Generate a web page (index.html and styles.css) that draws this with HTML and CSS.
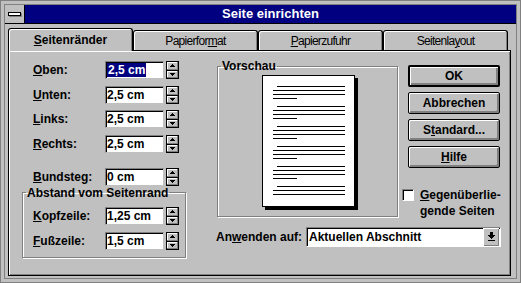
FILE: index.html
```html
<!DOCTYPE html>
<html lang="de">
<head>
    <meta charset="UTF-8">
    <meta name="viewport" content="width=device-width, initial-scale=1.0">
    <title>Seite einrichten</title>
    <link rel="stylesheet" href="styles.css">
</head>
<body>

    <!-- shared spinner / arrow drawings -->
    <svg class="defs" width="0" height="0">
        <symbol id="spin" viewBox="0 0 13 18" shape-rendering="crispEdges">
            <rect x="0" y="0" width="13" height="18" fill="#000"/>
            <rect x="1" y="1" width="11" height="8" fill="#c0c0c0"/>
            <rect x="1" y="10" width="11" height="7" fill="#c0c0c0"/>
            <rect x="1" y="1" width="10" height="1" fill="#fff"/>
            <rect x="1" y="1" width="1" height="7" fill="#fff"/>
            <rect x="1" y="8" width="11" height="1" fill="#808080"/>
            <rect x="11" y="1" width="1" height="8" fill="#808080"/>
            <rect x="1" y="10" width="10" height="1" fill="#fff"/>
            <rect x="1" y="10" width="1" height="6" fill="#fff"/>
            <rect x="1" y="16" width="11" height="1" fill="#808080"/>
            <rect x="11" y="10" width="1" height="7" fill="#808080"/>
            <rect x="6" y="3" width="1" height="1" fill="#000"/>
            <rect x="5" y="4" width="3" height="1" fill="#000"/>
            <rect x="4" y="5" width="5" height="1" fill="#000"/>
            <rect x="4" y="12" width="5" height="1" fill="#000"/>
            <rect x="5" y="13" width="3" height="1" fill="#000"/>
            <rect x="6" y="14" width="1" height="1" fill="#000"/>
        </symbol>
        <symbol id="down" viewBox="0 0 9 10" shape-rendering="crispEdges">
            <rect x="3" y="0" width="3" height="3" fill="#000"/>
            <rect x="1" y="3" width="7" height="1" fill="#000"/>
            <rect x="2" y="4" width="5" height="1" fill="#000"/>
            <rect x="3" y="5" width="3" height="1" fill="#000"/>
            <rect x="4" y="6" width="1" height="1" fill="#000"/>
            <rect x="1" y="8" width="7" height="1" fill="#000"/>
        </symbol>
    </svg>

    <div class="window">
        <div class="frame">
            <div class="titlebar">
                <div class="sysmenu"><span class="sysbar"></span></div>
                <div class="caption">Seite einrichten</div>
            </div>

            <div class="client">
                <div class="tabs">
                    <div class="tab active"><u>S</u>eitenränder</div>
                    <div class="tab">Papierfor<u>m</u>at</div>
                    <div class="tab"><u>P</u>apierzufuhr</div>
                    <div class="tab">Seitenla<u>y</u>out</div>
                </div>

                <div class="panel">
                    <!-- Margins -->
                    <div class="margins">
                        <div class="field">
                            <label><u>O</u>ben:</label>
                            <div class="edit"><span class="sel">2,5 cm</span></div>
                            <svg class="spin"><use href="#spin"/></svg>
                        </div>
                        <div class="field">
                            <label><u>U</u>nten:</label>
                            <div class="edit">2,5 cm</div>
                            <svg class="spin"><use href="#spin"/></svg>
                        </div>
                        <div class="field">
                            <label><u>L</u>inks:</label>
                            <div class="edit">2,5 cm</div>
                            <svg class="spin"><use href="#spin"/></svg>
                        </div>
                        <div class="field">
                            <label><u>R</u>echts:</label>
                            <div class="edit">2,5 cm</div>
                            <svg class="spin"><use href="#spin"/></svg>
                        </div>
                        <div class="field gutter">
                            <label><u>B</u>undsteg:</label>
                            <div class="edit">0 cm</div>
                            <svg class="spin"><use href="#spin"/></svg>
                        </div>

                        <fieldset class="group">
                            <legend>Abstand vom Seitenrand</legend>
                            <div class="field">
                                <label><u>K</u>opfzeile:</label>
                                <div class="edit">1,25 cm</div>
                                <svg class="spin"><use href="#spin"/></svg>
                            </div>
                            <div class="field">
                                <label><u>F</u>ußzeile:</label>
                                <div class="edit">1,5 cm</div>
                                <svg class="spin"><use href="#spin"/></svg>
                            </div>
                        </fieldset>
                    </div>

                    <!-- Preview, buttons, apply -->
                    <div class="right">
                        <div class="top">
                            <fieldset class="preview">
                                <legend>Vorschau</legend>
                                <div class="page">
                                    <div class="para"><i class="ln ind"></i><i class="ln"></i><i class="ln"></i><i class="ln short"></i></div>
                                    <div class="para"><i class="ln ind"></i><i class="ln"></i><i class="ln"></i><i class="ln short"></i></div>
                                    <div class="para"><i class="ln ind"></i><i class="ln"></i><i class="ln"></i><i class="ln short"></i></div>
                                    <div class="para"><i class="ln ind"></i><i class="ln"></i><i class="ln"></i><i class="ln short"></i></div>
                                    <div class="para"><i class="ln ind"></i><i class="ln"></i><i class="ln"></i><i class="ln short"></i></div>
                                    <div class="para"><i class="ln ind"></i><i class="ln"></i><i class="ln"></i></div>
                                </div>
                            </fieldset>

                            <div class="side">
                                <div class="buttons">
                                    <div class="btn default">OK</div>
                                    <div class="btn">Abbrechen</div>
                                    <div class="btn">S<u>t</u>andard...</div>
                                    <div class="btn"><u>H</u>ilfe</div>
                                </div>
                                <div class="check">
                                    <span class="box"></span>
                                    <span><u>G</u>egenüberlie-<br>gende Seiten</span>
                                </div>
                            </div>
                        </div>

                        <div class="apply">
                            <label>An<u>w</u>enden auf:</label>
                            <div class="combo">
                                <span class="value">Aktuellen Abschnitt</span>
                                <span class="drop"><svg class="arrow"><use href="#down"/></svg></span>
                            </div>
                        </div>
                    </div>
                </div>
            </div>
        </div>
    </div>

</body>
</html>
```

FILE: styles.css
```css
* {
    box-sizing: border-box;
}
body {
    margin: 0;
    background: #c0c0c0;
    font-family: "Liberation Sans", Arial, sans-serif;
    font-size: 12px;
    font-weight: bold;
    color: #000;
}
u {
    text-underline-offset: 1px;
}
.defs {
    display: block;
    width: 0;
    height: 0;
}

/* window frame */
.window {
    width: 521px;
    height: 283px;
    border: 1px solid #808080;
    padding: 3px;
}
.frame {
    height: 100%;
    border: 1px solid #808080;
    display: flex;
    flex-direction: column;
}
.titlebar {
    display: flex;
    height: 19px;
    border-bottom: 1px solid #000;
}
.sysmenu {
    width: 20px;
    border-right: 1px solid #000;
    display: flex;
    align-items: center;
    justify-content: center;
}
.sysbar {
    width: 13px;
    height: 4px;
    border: 1px solid #000;
    background: #fff;
    box-shadow: 1px 1px 0 #808080;
}
.caption {
    flex: 1;
    background: #000080;
    color: #fff;
    font-size: 13px;
    line-height: 18px;
    text-align: center;
}

/* tabs */
.client {
    flex: 1;
    padding: 4px 0 0 3px;
}
.tabs {
    display: flex;
    height: 22px;
}
.tab {
    width: 125px;
    height: 20px;
    margin-top: 2px;
    border: 1px solid #000;
    border-bottom: none;
    border-radius: 3px 3px 0 0;
    box-shadow: inset 1px 1px 0 #fff, inset -1px 0 0 #808080;
    font-size: 12px;
    font-weight: normal;
    letter-spacing: -0.7px;
    line-height: 20px;
    text-align: center;
}
.tab.active {
    position: relative;
    z-index: 1;
    height: 23px;
    margin-top: 0;
    margin-bottom: -1px;
    padding-top: 2px;
    background: #c0c0c0;
    font-weight: bold;
    letter-spacing: 0;
    line-height: 19px;
}
.panel {
    display: flex;
    width: 503px;
    height: 226px;
    border: 1px solid #000;
    box-shadow: inset 1px 1px 0 #fff, inset -1px -1px 0 #808080;
}

/* margin fields */
.margins {
    width: 207px;
    padding: 10px 0 0 13px;
}
.field {
    display: flex;
    align-items: center;
    height: 18px;
    padding-left: 11px;
}
.field + .field {
    margin-top: 6.5px;
}
.field.gutter {
    margin-top: 15px;
}
.field label {
    width: 72px;
}
.edit {
    width: 59px;
    height: 18px;
    padding-left: 1px;
    background: #fff;
    border: 1px solid;
    border-color: #808080 #c0c0c0 #c0c0c0 #808080;
    box-shadow: inset 1px 1px 0 #000;
    line-height: 16px;
    white-space: nowrap;
}
.sel {
    padding: 0 1px;
    background: #000080;
    color: #fff;
}
.spin {
    width: 13px;
    height: 18px;
    margin-left: 2px;
}

/* group boxes */
fieldset {
    margin: 0;
    min-width: 0;
    border: 1px solid #808080;
    box-shadow: 1px 1px 0 #fff, inset 1px 1px 0 #fff;
}
legend {
    padding: 0 1px;
    line-height: 14px;
}
.group {
    width: 164px;
    padding: 0 0 7px 3px;
}
.group .field {
    padding-left: 7px;
}
.group .field:first-of-type {
    margin-top: 7px;
}
.group .field + .field {
    margin-top: 7px;
}

/* preview */
.right {
    display: flex;
    flex-direction: column;
    padding-top: 8px;
}
.top {
    display: flex;
    align-items: flex-start;
}
.preview {
    width: 181px;
    height: 158px;
    margin-left: 1px;
    padding: 0 2px 9px 3px;
}
.page {
    width: 93px;
    height: 132px;
    margin: 2px auto 0;
    padding: 10px 0 0 10px;
    background: #fff;
    border: 1px solid #000;
    box-shadow: 3px 3px 0 #000;
}
.para {
    display: flex;
    flex-direction: column;
    gap: 3px;
}
.para + .para {
    margin-top: 7px;
}
.ln {
    display: block;
    width: 72px;
    height: 1px;
    background: #000;
}
.ln.ind {
    width: 68px;
    margin-left: 4px;
}
.ln.short {
    width: 24px;
}

/* buttons */
.side {
    margin-left: 10px;
}
.buttons {
    display: flex;
    flex-direction: column;
    gap: 5px;
    margin-top: 6px;
    width: 92px;
}
.btn {
    height: 22px;
    border: 1px solid #000;
    border-radius: 2px;
    box-shadow: inset 1px 1px 0 #fff, inset -1px -1px 0 #808080, inset -2px -2px 0 #808080;
    line-height: 20px;
    text-align: center;
}
.btn.default {
    border-width: 2px;
    line-height: 18px;
}
.check {
    display: flex;
    align-items: flex-start;
    gap: 6px;
    margin: 19px 0 0 -6px;
    line-height: 16px;
}
.box {
    width: 12px;
    height: 12px;
    margin-top: 2px;
    background: #fff;
    border: 1px solid;
    border-color: #808080 #fff #fff #808080;
    box-shadow: inset 1px 1px 0 #000;
}

/* apply to */
.apply {
    display: flex;
    align-items: center;
    margin-top: 8px;
}
.apply label {
    width: 90px;
}
.combo {
    display: flex;
    align-items: center;
    width: 195px;
    height: 20px;
    background: #fff;
    border: 1px solid;
    border-color: #808080 #fff #fff #808080;
    box-shadow: inset 1px 1px 0 #000;
}
.value {
    flex: 1;
    padding-left: 2px;
}
.drop {
    display: flex;
    align-items: center;
    justify-content: center;
    width: 16px;
    height: 18px;
    margin-right: 1px;
    background: #c0c0c0;
    box-shadow: inset 1px 1px 0 #fff, inset -1px -1px 0 #808080;
}
.arrow {
    width: 9px;
    height: 10px;
}
```
